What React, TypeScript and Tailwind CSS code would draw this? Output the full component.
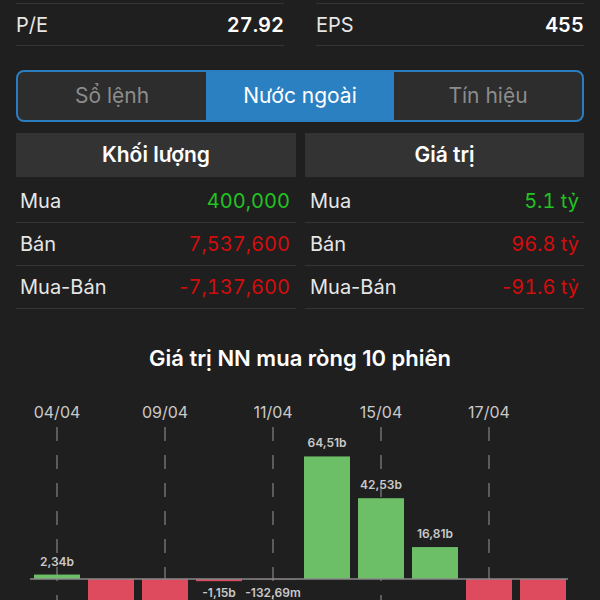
import React from "react";

const bars = [2.34, -40, -40, -1.15, -0.13, 64.51, 42.53, 16.81, -40, -40];
const labels: (string | null)[] = ["2,34b", null, null, "-1,15b", "-132,69m", "64,51b", "42,53b", "16,81b", null, null];
const dates = [
  { x: 57, t: "04/04" },
  { x: 165, t: "09/04" },
  { x: 273, t: "11/04" },
  { x: 381, t: "15/04" },
  { x: 489, t: "17/04" },
];

function Chart() {
  const base = 579;
  const k = 1.9;
  return (
    <svg width="600" height="210" viewBox="0 390 600 210" className="block">
      {dates.map((d) => (
        <g key={d.t}>
          <text x={d.x} y={418} textAnchor="middle" fill="#c9c9c9" fontSize="16" fontFamily="Inter, sans-serif">
            {d.t}
          </text>
          <line x1={d.x} x2={d.x} y1={427} y2={610} stroke="#707070" strokeWidth="1.5" strokeDasharray="14 14" />
        </g>
      ))}
      {bars.map((v, i) => {
        const x = 34 + i * 54;
        const h = Math.abs(v) * k;
        if (v >= 0) {
          return <rect key={i} x={x} y={base - h} width={46} height={h} fill="#6cbf66" />;
        }
        return <rect key={i} x={x} y={base} width={46} height={Math.max(h, 0)} fill="#de4a5e" />;
      })}
      <line x1={30} x2={568} y1={base} y2={base} stroke="#8a8a8a" strokeWidth="1.5" />
      {bars.map((v, i) => {
        const l = labels[i];
        if (!l) return null;
        const cx = 57 + i * 54;
        const h = Math.abs(v) * k;
        const y = v >= 0 ? base - h - 9 : 597;
        return (
          <text key={"l" + i} x={cx} y={y} textAnchor="middle" fill="#c9c9c9" fontSize="12" fontWeight="600" fontFamily="Inter, sans-serif">
            {l}
          </text>
        );
      })}
    </svg>
  );
}

function Num({ v, c }: { v: string; c: string }) {
  const neg = v.startsWith("-");
  return (
    <span className={c}>
      {neg && <span>-</span>}
      <span className="tabular-nums">{neg ? v.slice(1) : v}</span>
    </span>
  );
}

export default function App() {
  const rowsL = [
    { k: "Mua", v: "400,000", c: "text-[#22c322]" },
    { k: "Bán", v: "7,537,600", c: "text-[#d30d0d]" },
    { k: "Mua-Bán", v: "-7,137,600", c: "text-[#d30d0d]" },
  ];
  const rowsR = [
    { k: "Mua", v: "5.1 tỷ", c: "text-[#22c322]" },
    { k: "Bán", v: "96.8 tỷ", c: "text-[#d30d0d]" },
    { k: "Mua-Bán", v: "-91.6 tỷ", c: "text-[#d30d0d]" },
  ];
  return (
    <div className="w-[600px] h-[600px] overflow-hidden bg-[#1f1f1f] text-white" style={{ fontFamily: "Inter, 'Noto Sans', sans-serif" }}>
      <div className="px-4 pt-[3px] grid grid-cols-2 gap-8">
        <div className="border-t border-b border-[#353535] h-[43px] flex items-center justify-between text-[20px]">
          <span className="text-[#e6e6e6]">P/E</span>
          <span className="font-semibold tabular-nums">27.92</span>
        </div>
        <div className="border-t border-b border-[#353535] h-[43px] flex items-center justify-between text-[20px]">
          <span className="text-[#e6e6e6]">EPS</span>
          <span className="font-semibold tabular-nums">455</span>
        </div>
      </div>

      <div className="mx-4 mt-[24px] h-[52px] rounded-[8px] border-2 border-[#2b7dbf] bg-[#2d2d2d] grid grid-cols-[188px_188px_1fr] overflow-hidden text-[21px]">
        <div className="flex items-center justify-center text-[#8c8c8c]">Sổ lệnh</div>
        <div className="flex items-center justify-center bg-[#2b80c2] text-white">Nước ngoài</div>
        <div className="flex items-center justify-center text-[#8c8c8c]">Tín hiệu</div>
      </div>

      <div className="px-4 mt-[11px] grid grid-cols-[280px_1fr] gap-[9px]">
        <div>
          <div className="h-[44px] bg-[#333333] flex items-center justify-center text-[21px] font-semibold">Khối lượng</div>
          <div className="mt-[3px]">
            {rowsL.map((r) => (
              <div key={r.k} className="h-[43px] border-b border-[#353535] flex items-center justify-between pl-1 pr-[6px] text-[20px]">
                <span className="text-[#e6e6e6]">{r.k}</span>
                <Num v={r.v} c={r.c} />
              </div>
            ))}
          </div>
        </div>
        <div>
          <div className="h-[44px] bg-[#333333] flex items-center justify-center text-[21px] font-semibold">Giá trị</div>
          <div className="mt-[3px]">
            {rowsR.map((r) => (
              <div key={r.k} className="h-[43px] border-b border-[#353535] flex items-center justify-between pl-[5px] pr-[5px] text-[20px]">
                <span className="text-[#e6e6e6]">{r.k}</span>
                <Num v={r.v} c={r.c} />
              </div>
            ))}
          </div>
        </div>
      </div>

      <div className="mt-[37px] text-center text-[22px] font-semibold leading-[24px]">Giá trị NN mua ròng 10 phiên</div>
      <div className="mt-[20px]">
        <Chart />
      </div>
    </div>
  );
}
